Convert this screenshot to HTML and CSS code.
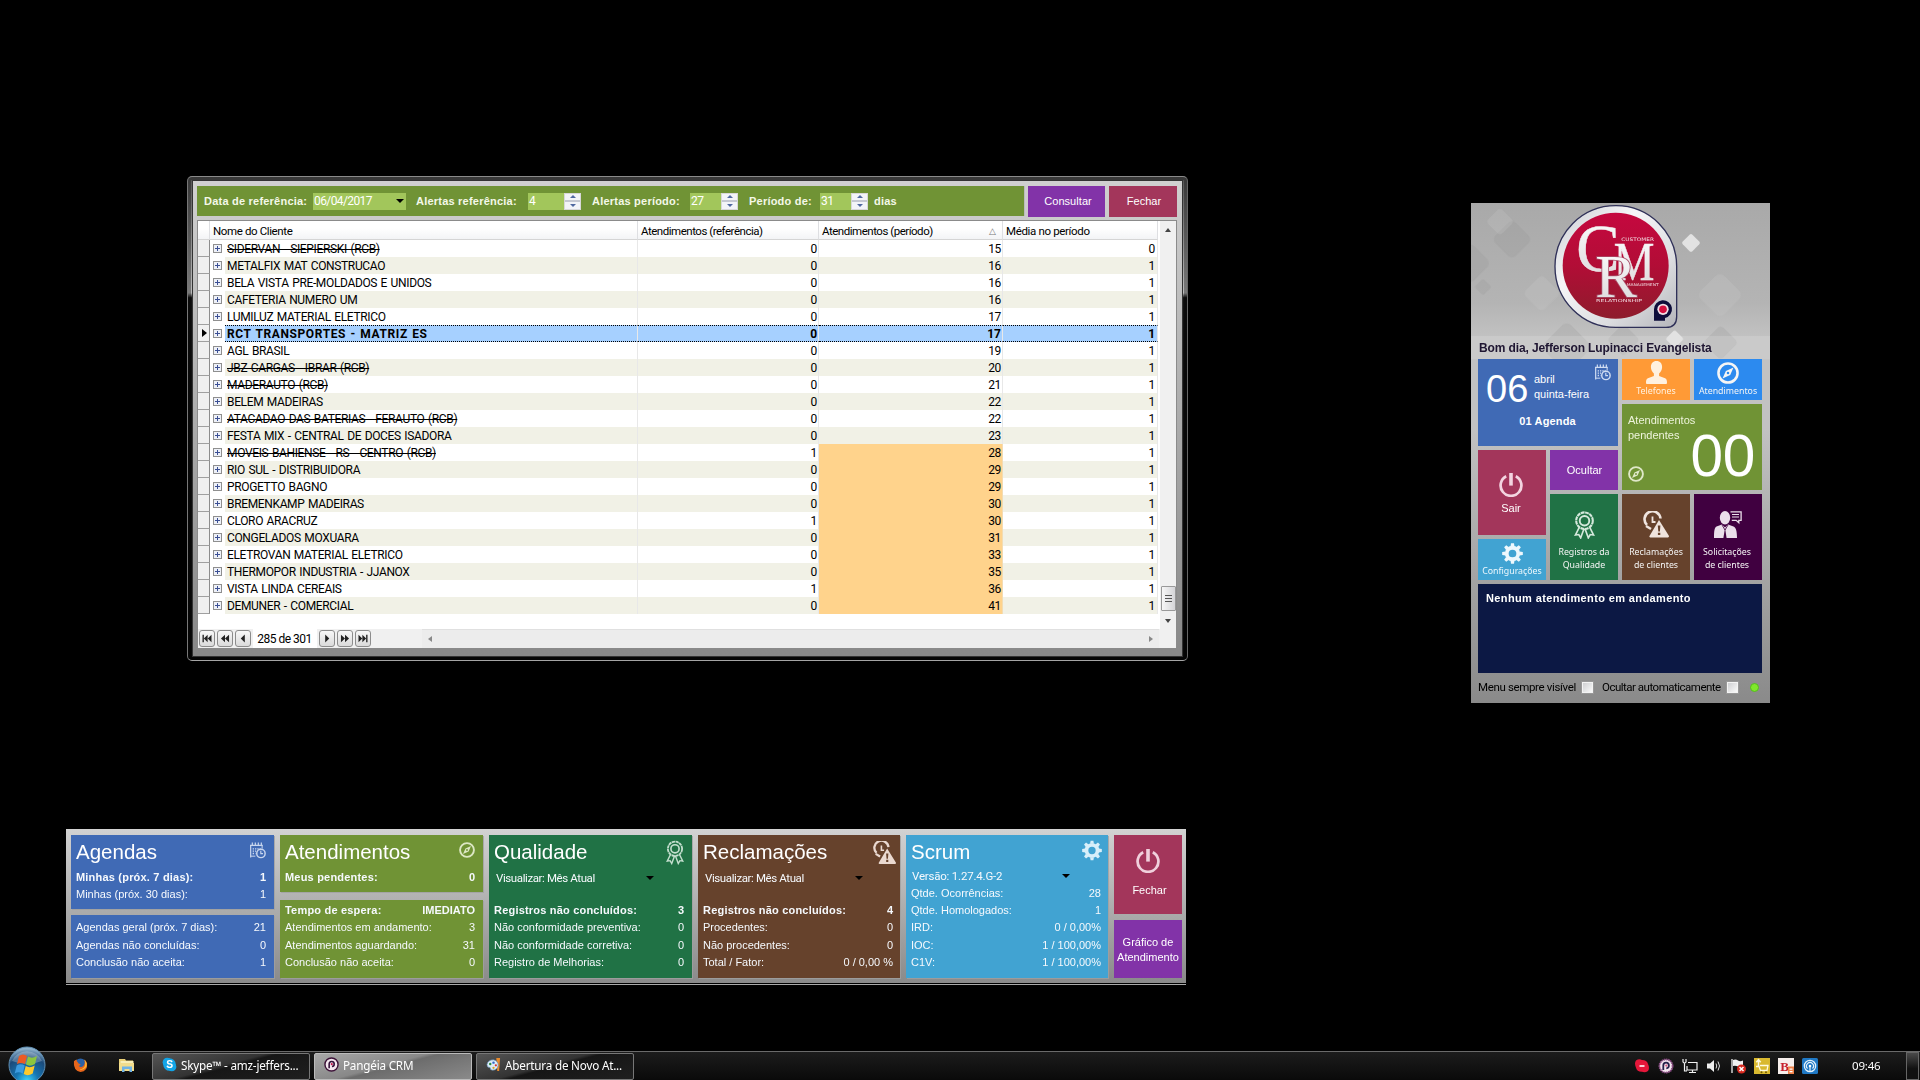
FILE: index.html
```html
<!DOCTYPE html>
<html lang="pt-BR">
<head>
<meta charset="utf-8">
<title>Pangéia CRM</title>
<link rel="stylesheet" href="styles.css">
</head>
<body>
<svg class="sprite" width="0" height="0" aria-hidden="true">
  <symbol id="gear" viewBox="0 0 24 24"><circle cx="12" cy="12" r="6.6" fill="none" stroke="currentColor" stroke-width="4.4"/><g fill="currentColor"><path id="tooth" d="M9.7 4 10.3.2h3.4l.6 3.8z"/><use href="#tooth" transform="rotate(45 12 12)"/><use href="#tooth" transform="rotate(90 12 12)"/><use href="#tooth" transform="rotate(135 12 12)"/><use href="#tooth" transform="rotate(180 12 12)"/><use href="#tooth" transform="rotate(225 12 12)"/><use href="#tooth" transform="rotate(270 12 12)"/><use href="#tooth" transform="rotate(315 12 12)"/></g></symbol>
  <symbol id="power" viewBox="0 0 24 24"><path d="M7.2 3.2a10.4 10.4 0 1 0 9.6 0" fill="none" stroke="currentColor" stroke-width="2.7"/><path d="M10.2 0h3.6v12.6h-3.6z" fill="currentColor"/></symbol>
  <symbol id="compass" viewBox="0 0 24 24"><circle cx="12" cy="12" r="10.4" fill="none" stroke="currentColor" stroke-width="2.8"/><path fill="currentColor" fill-rule="evenodd" d="M18 6 14.4 14.2 6 18l3.7-8.2zM12 10.6a1.4 1.4 0 1 0 0 2.8 1.4 1.4 0 0 0 0-2.8z"/></symbol>
  <symbol id="calendar" viewBox="0 0 24 24"><g fill="none" stroke="currentColor"><path d="M1 22.500V3.500M0 4.300h19M3.500 0v4M8 0v4M12.500 0v4M17 0v4" stroke-width="1.800"/><path d="M1 20.500h7M18.200 4v5" stroke-width="1.500"/><path d="M4 9.500h12M4 13h5M4 16.500h4" stroke-width="2" stroke-dasharray="2 1.500"/><circle cx="16.400" cy="16.400" r="6.300" stroke-width="2.200"/><path d="M16.200 12.300v4.300h3.300" stroke-width="1.700"/></g></symbol>
  <symbol id="ribbon" viewBox="0 0 22 29"><g fill="none" stroke="currentColor"><circle cx="11" cy="10" r="8.700" stroke-width="2.200" stroke-dasharray="4 .6"/><circle cx="11" cy="10" r="5" stroke-width="2"/><path d="M5.500 17 1.500 25l3.500-.5 2 3.500 3.500-9.500M16.500 17l4 8-3.500-.5-2 3.500-3.500-9.500" stroke-width="1.700"/></g></symbol>
  <symbol id="alert" viewBox="0 0 26 26"><path d="M4 13.500A8 8 0 1 1 17.500 7" fill="none" stroke="currentColor" stroke-width="2.600"/><path d="M3 14.500 8 17.500" stroke="currentColor" stroke-width="2.500"/><path d="M9.500 5v5.500h3" fill="none" stroke="currentColor" stroke-width="1.800"/><path fill="currentColor" fill-rule="evenodd" d="M16 8.500 26 24.500a1.500 1.500 0 0 1-1 1.500H7.500a1 1 0 0 1-1-1.500zM14.800 14l.5 6h1.600l.5-6zM14.900 21.300v2.300h2.400v-2.300z"/></symbol>
  <symbol id="client" viewBox="0 0 28 27"><g fill="currentColor"><ellipse cx="11" cy="6.700" rx="5.200" ry="6.700"/><path d="M0 27c0-7 .5-10.500 2.500-11.500L8 13.500l3 3 3-3 5.500 2c2.500 1 3.500 4.500 3.500 11.500z"/></g><path class="cut" d="m11 17-1.600 10h3.200z"/><path d="m8 14 3 5 3-5" fill="none" stroke="#400040" stroke-width=".8"/><path d="M16.500.9h10.600v8.400h-2.300v2.500l-2.600-2.500h-4.400" fill="none" stroke="currentColor" stroke-width="1.300"/><path d="M18 3.500h7M18 6h7" stroke="currentColor" stroke-width="1.100"/></symbol>
  <symbol id="person" viewBox="0 0 21 23"><path fill="currentColor" d="M10.500 0c3.700 0 5.600 2.600 5.600 6 0 2.700-1.400 5.200-3 6.500v2.600l6 2.200c1.800.8 1.900 2.900 1.900 4.600 0 .8-.6 1.100-1.300 1.100H1.300C.6 23 0 22.700 0 21.900c0-1.700.1-3.800 1.900-4.600l6-2.200v-2.600C6.300 11.200 4.900 8.700 4.900 6c0-3.400 1.900-6 5.600-6z"/></symbol>
  <symbol id="prev" viewBox="0 0 10 10"><path fill="currentColor" d="M7 .5v9L2.500 5z"/></symbol>
  <symbol id="rewind" viewBox="0 0 10 10"><path fill="currentColor" d="M5 .8v8.400L.5 5zM9.500.8v8.400L5 5z"/></symbol>
  <symbol id="first" viewBox="0 0 10 10"><path fill="currentColor" d="M0 .8h1.500v8.400H0zM5.700.8v8.400L1.500 5zM10 .8v8.400L5.800 5z"/></symbol>
</svg>

<main class="desktop">
  <section class="window report">
    <div class="report-body">
      <div class="toolbar">
        <div class="filters">
          <span class="lbl l1">Data de referência:</span><span class="field date">06/04/2017<i class="drop"></i></span>
          <span class="lbl l2">Alertas referência:</span><span class="field num wide">4<b class="spin"><i></i><i></i></b></span>
          <span class="lbl l3">Alertas período:</span><span class="field num">27<b class="spin"><i></i><i></i></b></span>
          <span class="lbl l4">Período de:</span><span class="field num">31<b class="spin"><i></i><i></i></b></span>
          <span class="lbl l5">dias</span>
        </div>
        <button class="btn consult">Consultar</button>
        <button class="btn close">Fechar</button>
      </div>
      <div class="grid">
        <div class="grid-main">
          <table>
            <colgroup><col class="c0"><col class="c1"><col class="c2"><col class="c3"><col class="c4"><col class="c5"></colgroup>
            <thead><tr><th></th><th colspan="2" class="hname">Nome do Cliente</th><th>Atendimentos (referência)</th><th>Atendimentos (período)<span class="sort">△</span></th><th>Média no período</th></tr></thead>
            <tbody>
            <tr><td></td><td><i class="plus"></i></td><td><s>SIDERVAN - SIEPIERSKI (RCB)</s></td><td>0</td><td>15</td><td>0</td></tr>
            <tr><td></td><td><i class="plus"></i></td><td>METALFIX MAT CONSTRUCAO</td><td>0</td><td>16</td><td>1</td></tr>
            <tr><td></td><td><i class="plus"></i></td><td>BELA VISTA PRE-MOLDADOS E UNIDOS</td><td>0</td><td>16</td><td>1</td></tr>
            <tr><td></td><td><i class="plus"></i></td><td>CAFETERIA NUMERO UM</td><td>0</td><td>16</td><td>1</td></tr>
            <tr><td></td><td><i class="plus"></i></td><td>LUMILUZ MATERIAL ELETRICO</td><td>0</td><td>17</td><td>1</td></tr>
            <tr class="current"><td><i class="pointer"></i></td><td><i class="plus"></i></td><td>RCT TRANSPORTES - MATRIZ ES</td><td>0</td><td>17</td><td>1</td></tr>
            <tr><td></td><td><i class="plus"></i></td><td>AGL BRASIL</td><td>0</td><td>19</td><td>1</td></tr>
            <tr><td></td><td><i class="plus"></i></td><td><s>JBZ CARGAS - IBRAR (RCB)</s></td><td>0</td><td>20</td><td>1</td></tr>
            <tr><td></td><td><i class="plus"></i></td><td><s>MADERAUTO (RCB)</s></td><td>0</td><td>21</td><td>1</td></tr>
            <tr><td></td><td><i class="plus"></i></td><td>BELEM MADEIRAS</td><td>0</td><td>22</td><td>1</td></tr>
            <tr><td></td><td><i class="plus"></i></td><td><s>ATACADAO DAS BATERIAS - FERAUTO (RCB)</s></td><td>0</td><td>22</td><td>1</td></tr>
            <tr><td></td><td><i class="plus"></i></td><td>FESTA MIX - CENTRAL DE DOCES ISADORA</td><td>0</td><td>23</td><td>1</td></tr>
            <tr><td></td><td><i class="plus"></i></td><td><s>MOVEIS BAHIENSE - RS - CENTRO (RCB)</s></td><td>1</td><td class="warn">28</td><td>1</td></tr>
            <tr><td></td><td><i class="plus"></i></td><td>RIO SUL - DISTRIBUIDORA</td><td>0</td><td class="warn">29</td><td>1</td></tr>
            <tr><td></td><td><i class="plus"></i></td><td>PROGETTO BAGNO</td><td>0</td><td class="warn">29</td><td>1</td></tr>
            <tr><td></td><td><i class="plus"></i></td><td>BREMENKAMP MADEIRAS</td><td>0</td><td class="warn">30</td><td>1</td></tr>
            <tr><td></td><td><i class="plus"></i></td><td>CLORO ARACRUZ</td><td>1</td><td class="warn">30</td><td>1</td></tr>
            <tr><td></td><td><i class="plus"></i></td><td>CONGELADOS MOXUARA</td><td>0</td><td class="warn">31</td><td>1</td></tr>
            <tr><td></td><td><i class="plus"></i></td><td>ELETROVAN MATERIAL ELETRICO</td><td>0</td><td class="warn">33</td><td>1</td></tr>
            <tr><td></td><td><i class="plus"></i></td><td>THERMOPOR INDUSTRIA - JJANOX</td><td>0</td><td class="warn">35</td><td>1</td></tr>
            <tr><td></td><td><i class="plus"></i></td><td>VISTA LINDA CEREAIS</td><td>1</td><td class="warn">36</td><td>1</td></tr>
            <tr><td></td><td><i class="plus"></i></td><td>DEMUNER - COMERCIAL</td><td>0</td><td class="warn">41</td><td>1</td></tr>
            </tbody>
          </table>
          <div class="vscroll"><i class="tri up"></i><i class="thumb"></i><i class="tri down"></i></div>
        </div>
        <div class="pager">
          <b><svg><use href="#first"/></svg></b><b><svg><use href="#rewind"/></svg></b><b><svg><use href="#prev"/></svg></b>
          <span>285 de 301</span>
          <b class="flip"><svg><use href="#prev"/></svg></b><b class="flip"><svg><use href="#rewind"/></svg></b><b class="flip"><svg><use href="#first"/></svg></b>
          <div class="hscroll"><i class="tri left"></i><i class="tri right"></i></div>
        </div>
      </div>
    </div>
  </section>

  <aside class="menu">
    <svg class="backdrop" viewBox="18 24 897 1500" width="299" height="500">
      <defs>
        <linearGradient id="bg" x1="0" y1="0" x2="0" y2="1"><stop offset="0" stop-color="#a9a9a9"/><stop offset=".2" stop-color="#b4b4b4"/><stop offset=".27" stop-color="#c2c2c2"/><stop offset=".45" stop-color="#c2c2c2"/><stop offset="1" stop-color="#8a8a8a"/></linearGradient>
        <linearGradient id="rim" x1="0" y1="0" x2="1" y2="1"><stop offset="0" stop-color="#c8cad0"/><stop offset=".35" stop-color="#f6f6f8"/><stop offset=".7" stop-color="#dcdde0"/><stop offset="1" stop-color="#b4b5ba"/></linearGradient>
        <linearGradient id="red" x1="0" y1="0" x2="0" y2="1"><stop offset="0" stop-color="#c5083f"/><stop offset=".5" stop-color="#b20d36"/><stop offset="1" stop-color="#8e1c2c"/></linearGradient>
        <linearGradient id="chrome" x1="0" y1="0" x2="0" y2="1"><stop offset="0" stop-color="#fff"/><stop offset="1" stop-color="#d9d6d8"/></linearGradient>
      </defs>
      <path fill="url(#bg)" d="M18 24h897v1500H18z"/>
      <g fill="#8f8f8f" opacity=".2">
        <rect x="98" y="90" width="86" height="86" rx="16" transform="rotate(45 141 133)"/>
        <rect x="-30" y="160" width="90" height="90" rx="18" transform="rotate(45 15 205)"/>
        <rect x="36" y="258" width="36" height="36" rx="6" transform="rotate(45 54 276)"/>
        <rect x="250" y="400" width="110" height="110" rx="20" transform="rotate(45 305 455)"/>
        <rect x="440" y="400" width="70" height="70" rx="12" transform="rotate(45 475 435)"/>
        <rect x="730" y="405" width="75" height="75" rx="14" transform="rotate(45 767 442)"/>
      </g>
      <g fill="#cdcdcd" opacity=".22"><rect x="75" y="50" width="60" height="60" rx="12" transform="rotate(45 105 80)"/><rect x="190" y="255" width="80" height="80" rx="14" transform="rotate(45 230 295)"/><rect x="715" y="250" width="100" height="100" rx="20" transform="rotate(45 765 300)"/></g>
      <path fill="#fff" opacity=".14" d="M18 423h897v70H18z"/>
      <g fill="#e2e2e2"><rect x="658" y="123" width="41" height="41" rx="6" transform="rotate(45 678 143)"/><rect x="610" y="412" width="39" height="39" rx="6" transform="rotate(45 629 431)"/></g>
      <path d="M452 32a182 182 0 0 1 183 183v150q0 32-32 32H452A182 182 0 0 1 270 214 182 182 0 0 1 452 32z" fill="url(#rim)" stroke="#2f3058" stroke-width="4"/>
      <circle cx="452" cy="212" r="159" fill="url(#red)"/>
      <g class="crm" fill="url(#chrome)" stroke="#f1eef0" stroke-width="1.500">
        <text x="334" y="229" font-size="204" textLength="130" lengthAdjust="spacingAndGlyphs">C</text>
        <text x="446" y="256" font-size="166" textLength="122" lengthAdjust="spacingAndGlyphs">M</text>
        <text x="391" y="305" font-size="182" textLength="125" lengthAdjust="spacingAndGlyphs" class="outline">R</text>
      </g>
      <g class="tiny" fill="#f3dfe4">
        <text x="469" y="138" font-size="14" textLength="98" lengthAdjust="spacingAndGlyphs">CUSTOMER</text>
        <text x="485" y="272" font-size="11" textLength="96" lengthAdjust="spacingAndGlyphs">MANAGEMENT</text>
        <text x="393" y="320" font-size="12" textLength="138" lengthAdjust="spacingAndGlyphs">RELATIONSHIP</text>
      </g>
      <path d="M567 377v-34a27 27 0 1 1 33 26v8z" fill="#0d0d3a"/><circle cx="594" cy="343" r="17" fill="#f1dfe6"/><circle cx="594" cy="343" r="11.500" fill="#d3103f"/>
    </svg>
    <h1>Bom dia, Jefferson Lupinacci Evangelista</h1>
    <div class="tiles">
      <div class="tile agenda"><svg class="i-cal"><use href="#calendar"/></svg><div class="day"><b>06</b><p>abril<br>quinta-feira</p></div><strong>01 Agenda</strong></div>
      <div class="tile small phones"><svg class="i-person"><use href="#person"/></svg><span>Telefones</span></div>
      <div class="tile small calls"><svg class="i-comp"><use href="#compass"/></svg><span>Atendimentos</span></div>
      <div class="tile pending"><p>Atendimentos<br>pendentes</p><div><svg><use href="#compass"/></svg><b>00</b></div></div>
      <div class="tile exit"><svg><use href="#power"/></svg><span>Sair</span></div>
      <div class="tile hide">Ocultar</div>
      <div class="tile tall quality"><svg class="i-rib"><use href="#ribbon"/></svg><span>Registros da<br>Qualidade</span></div>
      <div class="tile tall claims"><svg class="i-alert"><use href="#alert"/></svg><span>Reclamações<br>de clientes</span></div>
      <div class="tile tall requests"><svg class="i-client"><use href="#client"/></svg><span>Solicitações<br>de clientes</span></div>
      <div class="tile small config"><svg class="i-gear"><use href="#gear"/></svg><span>Configurações</span></div>
      <div class="tile status">Nenhum atendimento em andamento</div>
    </div>
    <footer><span class="f1">Menu sempre visível</span><i class="check"></i><span class="f2">Ocultar automaticamente</span><i class="check"></i><i class="led"></i></footer>
  </aside>

  <section class="dash">
    <div class="col">
      <div class="card blue top1"><h2>Agendas<svg class="d-cal"><use href="#calendar"/></svg></h2>
        <p class="strong"><span>Minhas (próx. 7 dias):</span><span>1</span></p><p><span>Minhas (próx. 30 dias):</span><span>1</span></p></div>
      <div class="card blue rest pad4"><p><span>Agendas geral (próx. 7 dias):</span><span>21</span></p><p><span>Agendas não concluídas:</span><span>0</span></p><p><span>Conclusão não aceita:</span><span>1</span></p></div>
    </div>
    <div class="col wide-gap">
      <div class="card green top2"><h2>Atendimentos<svg class="d-comp"><use href="#compass"/></svg></h2><p class="strong"><span>Meus pendentes:</span><span>0</span></p></div>
      <div class="card green rest pad2"><p class="strong"><span>Tempo de espera:</span><span>IMEDIATO</span></p><p><span>Atendimentos em andamento:</span><span>3</span></p><p><span>Atendimentos aguardando:</span><span>31</span></p><p><span>Conclusão não aceita:</span><span>0</span></p></div>
    </div>
    <div class="col"><div class="card teal rest"><h2>Qualidade<svg class="d-rib"><use href="#ribbon"/></svg></h2>
      <p class="combo gap-after"><span>Visualizar: Mês Atual</span><i class="drop"></i></p>
      <p class="strong"><span>Registros não concluídos:</span><span>3</span></p><p><span>Não conformidade preventiva:</span><span>0</span></p><p><span>Não conformidade corretiva:</span><span>0</span></p><p><span>Registro de Melhorias:</span><span>0</span></p></div></div>
    <div class="col"><div class="card brown rest"><h2>Reclamações<svg class="d-alert"><use href="#alert"/></svg></h2>
      <p class="combo gap-after"><span>Visualizar: Mês Atual</span><i class="drop"></i></p>
      <p class="strong"><span>Registros não concluídos:</span><span>4</span></p><p><span>Procedentes:</span><span>0</span></p><p><span>Não procedentes:</span><span>0</span></p><p><span>Total / Fator:</span><span>0 / 0,00 %</span></p></div></div>
    <div class="col"><div class="card sky rest"><h2>Scrum<svg class="d-gear"><use href="#gear"/></svg></h2>
      <p class="combo scrum"><span>Versão: 1.27.4.G-2</span><i class="drop"></i></p>
      <p><span>Qtde. Ocorrências:</span><span>28</span></p><p><span>Qtde. Homologados:</span><span>1</span></p><p><span>IRD:</span><span>0 / 0,00%</span></p><p><span>IOC:</span><span>1 / 100,00%</span></p><p><span>C1V:</span><span>1 / 100,00%</span></p></div></div>
    <div class="col actions"><div class="act wine"><svg><use href="#power"/></svg>Fechar</div><div class="act purple">Gráfico de<br>Atendimento</div></div>
  </section>
</main>

<nav class="taskbar">
  <svg class="orb" viewBox="0 0 38 36"><defs><radialGradient id="orb" cx=".5" cy=".95" r=".9"><stop offset="0" stop-color="#3fd8ff"/><stop offset=".35" stop-color="#1576b4"/><stop offset=".75" stop-color="#1b4a7a"/><stop offset="1" stop-color="#8fb2cc"/></radialGradient></defs>
    <circle cx="19" cy="19" r="18" fill="url(#orb)" stroke="#5f8fb3"/><path d="M4 15a16 15 0 0 1 30 0q-15 6-30 0z" fill="#fff" opacity=".25"/>
    <path d="M11 10q4-3 8 0l-2 8q-4-2-8 0z" fill="#ec5a24"/><path d="M20 10.500q4 2.500 9-.5l-2 8q-5 3-9 .5z" fill="#8cc63e"/><path d="M8.700 19.500q4-2.500 8 0l-2 8q-4-2.500-8 0z" fill="#3b9be0"/><path d="M17.700 20q4 2.500 9-.5l-2 8q-5 3-9 .5z" fill="#fdc92c"/></svg>
  <svg class="fox" viewBox="0 0 16 16"><circle cx="8" cy="7.500" r="6.500" fill="#2a62a8"/><path d="M1 4Q0 14 8 15.500 16 14.500 15 6q-1-3-3-4 1.500 4-1 7-2.500 2-5 0 2-.5 2-2-2 0-3-2-1.500-1.500-1-3Q2 2.500 1 4z" fill="#e8661b"/><path d="M12 2q4 4 2 8-3 4-7 3 5-1 6-5 .5-3-1-6z" fill="#fbb92f"/></svg>
  <svg class="folder" viewBox="0 0 17 16"><path d="M1 2h6l1 1.500h7V14H1z" fill="#e9cf76"/><path d="M2.500 4h13v4h-13z" fill="#f9efb8"/><path d="M1 6h15v8H1z" fill="#f2dd8c"/><path d="M4 15V9.500h10V15h-2.500v-3h-5v3z" fill="#6fb3e6"/></svg>
  <div class="task"><svg viewBox="0 0 16 16"><circle cx="5.500" cy="5.500" r="4.800" fill="#12a5e8"/><circle cx="10.500" cy="10.500" r="4.800" fill="#12a5e8"/><circle cx="8" cy="8" r="6.700" fill="#12a5e8"/><text x="8" y="12" text-anchor="middle" class="glyph">S</text></svg>Skype™ - amz-jeffers...</div>
  <div class="task active"><svg viewBox="0 0 16 16"><circle cx="8" cy="8" r="7" fill="#f4e6ef" stroke="#3d1238" stroke-width="1.500"/><path d="M5.500 12V7.500a2.700 2.700 0 1 1 3 2.700" fill="none" stroke="#35113a" stroke-width="1.700"/><circle cx="8.300" cy="7.600" r="1.100" fill="#c4184d"/></svg>Pangéia CRM</div>
  <div class="task"><svg viewBox="0 0 16 16"><path d="M11 1h4l-1 14h-2z" fill="#e88b2e"/><path d="M1 8q1-5 7-5 5 1 5 6-1 5-6 5-3 0-2.500-2.500Q1 11.500 1 8z" fill="#dcecf8" stroke="#5b87ad" stroke-width=".7"/><circle cx="4.500" cy="7.500" r="1.300" fill="#2e8f3c"/><circle cx="8" cy="6" r="1.300" fill="#3267c8"/><circle cx="10.500" cy="8.800" r="1.200" fill="#d8322a"/><circle cx="8" cy="11.500" r="1.200" fill="#d9a51e"/></svg>Abertura de Novo At...</div>
  <div class="tray">
    <svg viewBox="0 0 16 16"><path d="M2 2.500q3-2 6-.5 5 0 6 4 2 4 0 7-3 2-6 .8-5 .2-6-4Q0 5 2 2.500z" fill="#e5173a"/><path d="M5.500 7.200h5v1.600h-5z" fill="#fff"/></svg>
    <svg viewBox="0 0 16 16"><circle cx="8" cy="8" r="6.600" fill="#f4e6ef" stroke="#8a4b84" stroke-width="1.800" stroke-dasharray="1.500 .7"/><path d="M5.300 12V7.500a2.800 2.800 0 1 1 3 2.800" fill="none" stroke="#26204a" stroke-width="1.800"/><circle cx="8.300" cy="7.600" r="1.100" fill="#d3557c"/></svg>
    <svg viewBox="0 0 16 16"><path d="M6 4.500h9v7.500H5V8M7 14.500h7M10.500 12v2.500M1 1v3q1.500 2 3 0V1M2.500 5v8H5" fill="none" stroke="#f2f2f2" stroke-width="1.200"/></svg>
    <svg viewBox="0 0 16 16"><path d="M1 5.500h3L8 2v12l-4-3.500H1z" fill="#eee"/><path d="M10 5.500q1.500 2.500 0 5M12 3.500q3 4.500 0 9" fill="none" stroke="#ddd"/></svg>
    <svg viewBox="0 0 16 16"><path d="M2 1v14" stroke="#eee" stroke-width="1.300"/><path d="M3 2q3-1 5 .5t5 0v6q-3 1-5 0T3 8z" fill="#f2f2f2"/><circle cx="11.500" cy="11" r="4.500" fill="#d8291f"/><path d="m9.500 9 4 4m0-4-4 4" stroke="#fff" stroke-width="1.500"/></svg>
    <svg viewBox="0 0 16 16"><path d="M0 0h16v16H0z" fill="#d9b92f"/><path d="M4.500 8V2M2.300 4.200l2.200-2.500 2.200 2.500" fill="none" stroke="#fffbe0" stroke-width="1.500"/><path d="M2 8.500h3l1.500 4H13L14 7.500H6" fill="none" stroke="#fffbe0" stroke-width="1.300"/><circle cx="7.500" cy="14.300" r="1" fill="#725c00"/><circle cx="12" cy="14.300" r="1" fill="#725c00"/></svg>
    <svg viewBox="0 0 16 16"><path d="M0 0h16v16H0z" fill="#f7efec"/><text x="6.500" y="12.500" text-anchor="middle" class="bglyph">B</text><path d="M10 8.500h6V16h-6z" fill="#ef8148"/><path d="M11.500 10.500h3v1.200h-3zm0 2.500h3v1.200h-3z" fill="#fff"/></svg>
    <svg viewBox="0 0 16 16"><rect width="16" height="16" rx="1.500" fill="#1f78c4"/><g fill="none" stroke="#e4f2fc"><circle cx="8" cy="8" r="5.700" stroke-width="1.200"/><path d="M5.500 10.500a3.500 3.500 0 1 1 5 0M8 8v6" stroke-width="1.200"/></g><circle cx="8" cy="8" r="1.300" fill="#fff"/></svg>
  </div>
  <time>09:46</time><i class="peek"></i>
</nav>
</body>
</html>
```
FILE: styles.css
```css
* { box-sizing: border-box; }
body { margin: 0; width: 1920px; height: 1080px; overflow: hidden; background: #000; font: 11px "Liberation Sans", Arial, sans-serif; color: #fff; display: flex; flex-direction: column; }
.sprite { position: absolute; }
h1, h2, p { margin: 0; font-weight: normal; }
svg { display: block; flex: none; }
.desktop { position: relative; height: 1051px; }

/* report window */
.window { position: absolute; left: 187px; top: 176px; width: 1001px; height: 485px; border: 1px solid; border-color: #8a8a8a #666 #a5a5a5 #777; border-radius: 5px; background: linear-gradient(#555 0, #bbb 24%, #111 25%, #080808 100%); box-shadow: inset 0 0 0 3px rgba(0,0,0,.35); }
.report-body { margin: 4px 5px 4px 5px; height: 475px; padding: 5px 5px 8px 4px; background: linear-gradient(#d0d0d0, #888); outline: 1px solid #333; }
.toolbar { display: flex; height: 31px; gap: 4px; margin-bottom: 3px; }
.filters { flex: none; width: 828px; height: 30px; background: #709335; display: flex; align-items: center; padding-left: 7px; border-right: 1px solid #bcbcbc; }
.lbl { font-weight: bold; letter-spacing: .22px; color: #f4f8e8; white-space: nowrap; }
.l1 { width: 109px; }
.l2 { width: 122px; padding-left: 10px; }
.l3 { width: 109px; padding-left: 11px; }
.l4 { width: 82px; padding-left: 11px; }
.l5 { padding-left: 6px; }
.field { display: flex; align-items: center; height: 17px; background: #a2c65b; padding-left: 1px; font: 12px Roboto, sans-serif; letter-spacing: -.5px; color: #fff; justify-content: space-between; }
.date { width: 93px; padding-right: 2px; letter-spacing: -.6px; }
.num { width: 48px; }
.num.wide { width: 53px; }
.drop { width: 0; height: 0; border: 4px solid transparent; border-top-color: #000; border-bottom: 0; }
.spin { width: 17px; height: 17px; display: grid; grid-template-rows: 1fr 1fr; gap: 2px; border: 1px solid #d8d8d8; background: #c5c8d2; }
.spin i { background: #f3f4f8; display: grid; place-items: center; }
.spin i::after { content: ""; border: 3px solid transparent; border-top-width: 0; border-bottom-color: #5068a0; }
.spin i + i::after { transform: rotate(180deg); }
.btn { border: 0; padding: 0 0 1px; margin: 0; color: #fff; font: 11px "Liberation Sans", sans-serif; letter-spacing: .05px; }
.consult { width: 77px; padding-left: 3px; margin-left: -1px; background: #8233a8; }
.close { width: 68px; padding-left: 2px; background: #a3365b; }
.grid { height: 428px; border: 1px solid #8b8b8b; border-bottom: 0; background: #fff; color: #000; font: 12px Roboto, sans-serif; letter-spacing: -.35px; }
.grid-main { display: flex; height: 408px; justify-content: space-between; }
table { width: 960px; border-collapse: separate; border-spacing: 0; table-layout: fixed; align-self: flex-start; }
.c0 { width: 12px; } .c1 { width: 15px; } .c2 { width: 413px; } .c3 { width: 181px; } .c4 { width: 184px; } .c5 { width: 155px; }
th, td { padding: 2px 0 0; height: 17px; line-height: 15px; white-space: nowrap; }
td { word-spacing: .9px; }
th { height: 19px; font-size: 11.5px; font-weight: normal; text-align: left; padding-left: 3px; border-right: 1px solid #dedfe2; border-bottom: 1px solid #d5d5d5; background: linear-gradient(#fff 40%, #f3f4f6); letter-spacing: -.48px; }
th.hname { letter-spacing: -.38px; }
th:last-child { letter-spacing: -.35px; }
th:first-child { padding: 0; }
.sort { float: right; margin-right: 6px; font-size: 9px; color: #777; }
td:nth-child(1) { padding: 0; background: #f0f0f0; border-right: 1px solid #8d8d8d; border-bottom: 1px solid #a0a0a0; }
td:nth-child(2) { padding: 0; }
td:nth-child(3) { padding-left: 2px; }
td:nth-child(n+3) { border-right: 1px solid #e8e8e8; }
td:nth-child(n+4) { text-align: right; padding-right: 1px; }
td:last-child { padding-right: 2px; }
tr:nth-child(even) td:nth-child(n+3) { background-color: #f1f1e6; }
tbody tr td.warn:nth-child(5) { background: #ffd38c; border-right-color: #f3dcb2; }
tbody tr.current td:nth-child(n+3) { background: #a6d0ff; font-weight: bold; letter-spacing: .6px; border-top: 1px dotted #000; border-bottom: 1px dotted #000; line-height: 14px; padding-top: 1px; }
tbody tr.current td:nth-child(n+4) { letter-spacing: 0; }
s { text-decoration-thickness: 1px; text-decoration-skip-ink: none; }
.plus { display: block; width: 9px; height: 9px; margin-left: 3px; border: 1px solid #8f8f8f; background: linear-gradient(#3b4f94, #3b4f94) center/5px 1px no-repeat, linear-gradient(#3b4f94, #3b4f94) center/1px 5px no-repeat, #eef1f8; }
.pointer { display: block; margin-left: 4px; width: 0; height: 0; border: 4px solid transparent; border-left: 5px solid #000; border-right: 0; }
.vscroll { width: 16px; background: #f0f0f0; display: flex; flex-direction: column; align-items: center; padding: 7px 0 6px; }
.tri { width: 0; height: 0; border: 3px solid transparent; }
.up { border-bottom: 4px solid #444; border-top: 0; }
.down { border-top: 4px solid #444; border-bottom: 0; margin-top: 8px; }
.left { border-right: 4px solid #888; border-left: 0; }
.right { border-left: 4px solid #888; border-right: 0; }
.thumb { margin-top: auto; width: 15px; height: 25px; border: 1px solid #999; border-radius: 1px; background: repeating-linear-gradient(#555 0 1px, transparent 1px 3px) center/7px 7px no-repeat, linear-gradient(90deg, #f6f6f6, #d5d5d8); }
.pager { display: flex; align-items: center; height: 19px; gap: 2px; padding-left: 1px; background: #f0f0f0; }
.pager b { width: 16px; height: 17px; border: 1px solid #8c8c8c; border-radius: 3px; background: linear-gradient(#f8f8f8, #dadada); display: grid; place-items: center; color: #222; }
.pager b svg { width: 10px; height: 9px; }
.pager .flip { transform: scaleX(-1); }
.pager span { width: 64px; padding: 1px 1px 0 0; text-align: center; letter-spacing: -.5px; background: #fff; line-height: 18px; }
.hscroll { flex: 1; margin: 0 17px 0 49px; height: 19px; border-top: 1px solid #e0e0e0; padding: 0 6px; display: flex; justify-content: space-between; align-items: center; background: #ececec; }

/* side menu */
.menu { position: absolute; left: 1471px; top: 203px; width: 299px; height: 500px; padding: 133px 8px 0 7px; }
.backdrop { position: absolute; inset: 0; z-index: -1; }
.crm { font-family: "Liberation Serif", serif; }
.outline { paint-order: stroke; stroke: #a8506a; stroke-width: 5px; }
.tiny { font-family: "DejaVu Sans", sans-serif; }
.menu h1 { height: 23px; line-height: 25px; padding-left: 1px; font-size: 12px; font-weight: bold; letter-spacing: -.12px; color: #1f1632; white-space: nowrap; }
.tiles { display: grid; grid-template: 41px 42px 40px 41px 41px 89px / repeat(4, 68px); gap: 4px; }
.tile { display: flex; flex-direction: column; align-items: center; }
.small, .tall { font: 8.8px/12px "Noto Sans", sans-serif; text-align: center; color: #f5f5f5; white-space: nowrap; }
.small { justify-content: flex-end; padding-bottom: 3px; }
.agenda { grid-area: 1 / 1 / 3 / 3; background: #406ab5; position: relative; }
.i-cal { position: absolute; right: 7px; top: 5px; width: 16px; height: 17px; color: #cfdcf2; }
.day { display: flex; align-self: stretch; padding: 9px 0 0 8px; }
.day b { font: 38px/42px "Liberation Sans", sans-serif; width: 48px; }
.day p { line-height: 15px; padding-top: 4px; }
.agenda strong { margin-top: 5px; letter-spacing: .15px; padding-right: 1px; }
.tile.phones { background: #ff9a36; color: #fff1e0; }
.calls { background: #2c8aef; }
.i-person { width: 21px; height: 23px; margin-bottom: 1px; }
.i-comp { width: 22px; height: 22px; margin-bottom: 1px; }
.pending { grid-area: 2 / 3 / 4 / 5; background: #709335; align-items: stretch; padding: 9px 7px 0 6px; }
.pending p { line-height: 15px; color: #eef4dc; }
.pending div { display: flex; justify-content: space-between; margin-top: -17px; }
.pending svg { width: 16px; height: 16px; margin-top: 40px; color: #dfe8c8; }
.pending b { font: 58.5px/60px "Liberation Sans", sans-serif; letter-spacing: -.3px; }
.exit { grid-area: 3 / 1 / 5 / 2; background: #a3365b; padding: 23px 2px 0 0; }
.exit svg { width: 24px; height: 24px; margin-bottom: 5px; color: #f3d4e0; }
.hide { background: #8233a8; justify-content: center; grid-area: 3 / 2; padding-left: 1px; font-size: 11px; }
.tall { grid-row: 4 / 6; padding-top: 17px; justify-content: space-between; padding-bottom: 8px; line-height: 13px; }
.quality { background: #207245; } .claims { background: #66422c; } .requests { background: #400040; padding-right: 2px; }
.i-rib { width: 21px; height: 28px; color: #d5e9dc; } .i-alert { width: 26px; height: 27px; color: #efe4de; } .i-client { width: 28px; height: 27px; margin-left: 2px; color: #eadfea; }
.cut { fill: #400040; }
.config { background: #41a3d2; grid-area: 5 / 1; color: #eef8fd; }
.i-gear { width: 21px; height: 21px; margin-bottom: 1px; }
.status { grid-area: 6 / 1 / 7 / 5; background: #0c1844; align-items: flex-start; padding: 8px; font-weight: bold; letter-spacing: .38px; }
.menu footer { display: flex; align-items: center; height: 28px; color: #000; font: 11.5px Roboto, sans-serif; letter-spacing: -.35px; white-space: nowrap; }
.f1 { width: 104px; } .f2 { width: 125px; margin-left: 9px; letter-spacing: -.5px; }
.check { flex: none; width: 11px; height: 11px; background: linear-gradient(135deg, #cfd0d2, #fafafa); border: 1px solid #f4f4f4; outline: 1px solid #999; }
.led { flex: none; width: 9px; height: 9px; border-radius: 50%; margin-left: 12px; background: #7fe82a; border: 1px solid #55bb20; }

/* dashboard */
.dash { position: absolute; left: 66px; top: 829px; width: 1120px; height: 154px; padding: 6px 4px 5px 5px; background: linear-gradient(#d2d2d2, #8a8a8a); display: grid; grid-template-columns: repeat(3, 203px) 202px 202px 68px; gap: 6px; box-shadow: 0 1px #000, 0 2px #aaa; }
.col { display: flex; flex-direction: column; gap: 6px; height: 143px; }
.wide-gap { gap: 8px; }
.card { padding: 0 8px 0 5px; color: #f6f9fd; box-shadow: 1px 1px rgba(160,160,160,.8); }
.rest { flex: 1; }
.top1 { height: 74px; } .top2 { height: 57px; }
.pad4 { padding-top: 4px; } .pad2 { padding-top: 1.500px; }
.brown, .sky { padding-right: 7px; }
.card h2 { display: flex; justify-content: space-between; height: 33px; font-size: 20.500px; line-height: 33px; color: #fff; }
.card p { display: flex; justify-content: space-between; height: 17.200px; line-height: 17.500px; white-space: nowrap; }
.card p:nth-last-child(-n+2), .top1 p.strong { line-height: 19px; }
.card p.strong { font-weight: bold; letter-spacing: .2px; }
.card p.strong span:last-child { letter-spacing: 0; }
.card p.combo { height: 17px; font: 11.500px/20px Roboto, sans-serif; letter-spacing: -.4px; padding: 2px 30px 0 2px; align-items: center; }
.card p.scrum { padding: 0 31px 0 1px; line-height: 15px; letter-spacing: -.2px; height: 16.500px; }
.card p.gap-after { margin-bottom: 16.500px; }
.blue { background: #406ab5; } .green { background: #709335; } .teal { background: #207245; } .brown { background: #66422c; } .sky { background: #41a3d2; }
.d-cal { width: 16px; height: 17px; margin-top: 7px; color: #c8d6ee; }
.d-comp { width: 16px; height: 16px; margin-top: 7px; color: #dce7c4; }
.d-rib { width: 18px; height: 25px; margin-top: 5px; color: #c5dfcf; }
.d-alert { width: 23px; height: 23px; margin: 6px -3px 0 0; color: #ead9d0; }
.d-gear { width: 20px; height: 21px; margin-top: 5px; margin-right: -1px; color: #d8effa; }
.act { display: flex; flex-direction: column; align-items: center; text-align: center; line-height: 15px; }
.wine { height: 79px; background: #a3365b; padding: 14px 0 0 3px; gap: 10px; }
.wine svg { width: 24px; height: 24px; color: #f0d0dc; margin-right: 3px; }
.purple { height: 58px; padding-top: 1px; background: #8233a8; justify-content: center; }

/* taskbar */
.taskbar { height: 29px; display: flex; align-items: center; border-top: 1px solid #6a6a6a; background: linear-gradient(#1c1c1c, #0a0a0a); font: 11.700px "Noto Sans", "Open Sans", sans-serif; letter-spacing: -.2px; }
.orb { width: 38px; height: 36px; margin: -4px 0 0 8px; }
.fox { width: 15px; height: 16px; margin: -2px 0 0 27px; }
.folder { width: 17px; height: 16px; margin: -2px 17px 0 30px; }
.task { display: flex; align-items: center; gap: 4px; width: 158px; height: 27px; margin-right: 4px; padding: 0 0 3px 9px; border: 1px solid #777; border-radius: 2px; background: linear-gradient(165deg, #555 0, #333 45%, #161616 50%, #1f1f1f); white-space: nowrap; }
.task.active { background: linear-gradient(165deg, #a8a8a8 0, #888 45%, #6c6c6c 50%, #8a8a8a); border-color: #bbb; }
.task svg { width: 15px; height: 15px; }
.glyph { font: bold 11px "Liberation Sans", sans-serif; fill: #fff; }
.bglyph { font: bold 13px "Liberation Serif", serif; fill: #c61f2b; }
.tray { display: flex; gap: 8px; margin: -1px 0 0 auto; }
.tray svg { width: 16px; height: 16px; }
.taskbar time { margin: -2px 26px 0 34px; width: 28px; font-size: 11.500px; }
.peek { width: 13px; height: 28px; border: 1px solid #666; background: linear-gradient(#4a4a4a, #111 60%); margin-right: 1px; }
```
